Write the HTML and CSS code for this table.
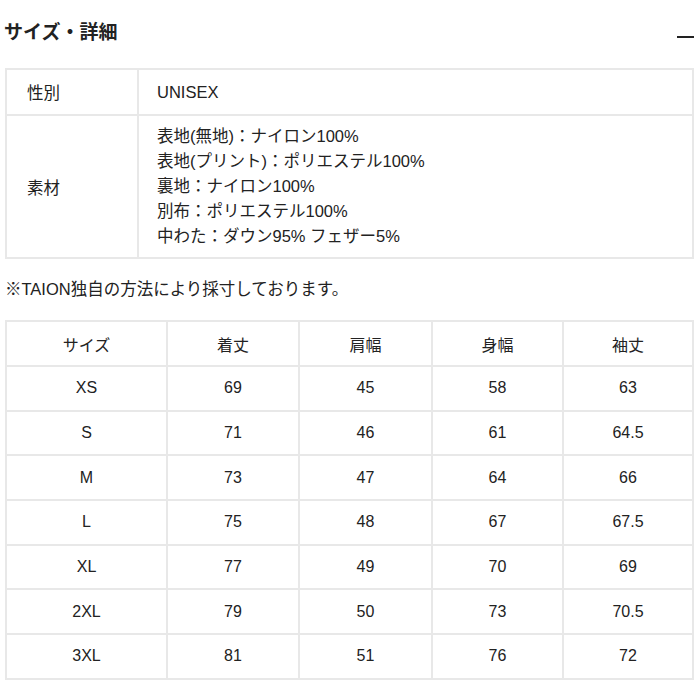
FILE: index.html
```html
<!DOCTYPE html>
<html lang="ja">
<head>
<meta charset="utf-8">
<link rel="stylesheet" href="styles.css">
</head>
<body>
<div class="page">
  <div class="head">
    <h2 class="title">サイズ・詳細</h2>
    <span class="minus"></span>
  </div>
  <table class="spec">
    <tr class="r1"><th>性別</th><td>UNISEX</td></tr>
    <tr class="r2"><th>素材</th><td>表地(無地)：ナイロン100%<br>表地(プリント)：ポリエステル100%<br>裏地：ナイロン100%<br>別布：ポリエステル100%<br>中わた：ダウン95% フェザー5%</td></tr>
  </table>
  <p class="note">※TAION独自の方法により採寸しております。</p>
  <table class="size">
    <tr class="hd"><th class="c1">サイズ</th><th class="c2">着丈</th><th class="c3">肩幅</th><th class="c4">身幅</th><th class="c5">袖丈</th></tr>
    <tr><td>XS</td><td>69</td><td>45</td><td>58</td><td>63</td></tr>
    <tr><td>S</td><td>71</td><td>46</td><td>61</td><td>64.5</td></tr>
    <tr><td>M</td><td>73</td><td>47</td><td>64</td><td>66</td></tr>
    <tr><td>L</td><td>75</td><td>48</td><td>67</td><td>67.5</td></tr>
    <tr><td>XL</td><td>77</td><td>49</td><td>70</td><td>69</td></tr>
    <tr><td>2XL</td><td>79</td><td>50</td><td>73</td><td>70.5</td></tr>
    <tr><td>3XL</td><td>81</td><td>51</td><td>76</td><td>72</td></tr>
  </table>
</div>
</body>
</html>
```
FILE: styles.css
```css
* { box-sizing: border-box; }
body {
  margin: 0;
  background: #fff;
  color: #222;
  font-family: "Liberation Sans", Arial, "Noto Sans CJK JP", sans-serif;
  font-size: 16px;
}
.page { padding: 0 6px 0 5px; }
.head {
  display: flex;
  align-items: flex-start;
  justify-content: space-between;
  height: 68px;
  padding-top: 19px;
}
.title {
  margin: 0 0 0 -1px;
  font-size: 19px;
  line-height: 28px;
  font-weight: bold;
}
.minus {
  width: 17px;
  height: 2px;
  background: #222;
  margin-top: 17px;
}
table {
  width: 100%;
  border-collapse: collapse;
  border: 2px solid #e8e8e8;
}
th, td {
  border: 2px solid #e8e8e8;
  font-weight: normal;
}
.spec { font-size: 16.5px; }
.spec th {
  width: 132px;
  text-align: left;
  padding: 0 20px;
}
.spec td {
  text-align: left;
  padding: 0 18px;
  line-height: 25px;
}
.spec .r1 th, .spec .r1 td { height: 46px; }
.spec .r2 th, .spec .r2 td { height: 143px; }
.note {
  margin: 18px 0 18px 0;
  line-height: 25px;
  font-size: 16.5px;
}
.size th, .size td {
  text-align: center;
  height: 44.7px;
  padding: 0;
}
.size .hd th { height: 45px; }
.size .c1 { width: 161px; }
.size .c2 { width: 132px; }
.size .c3 { width: 133px; }
.size .c4 { width: 131px; }
```
